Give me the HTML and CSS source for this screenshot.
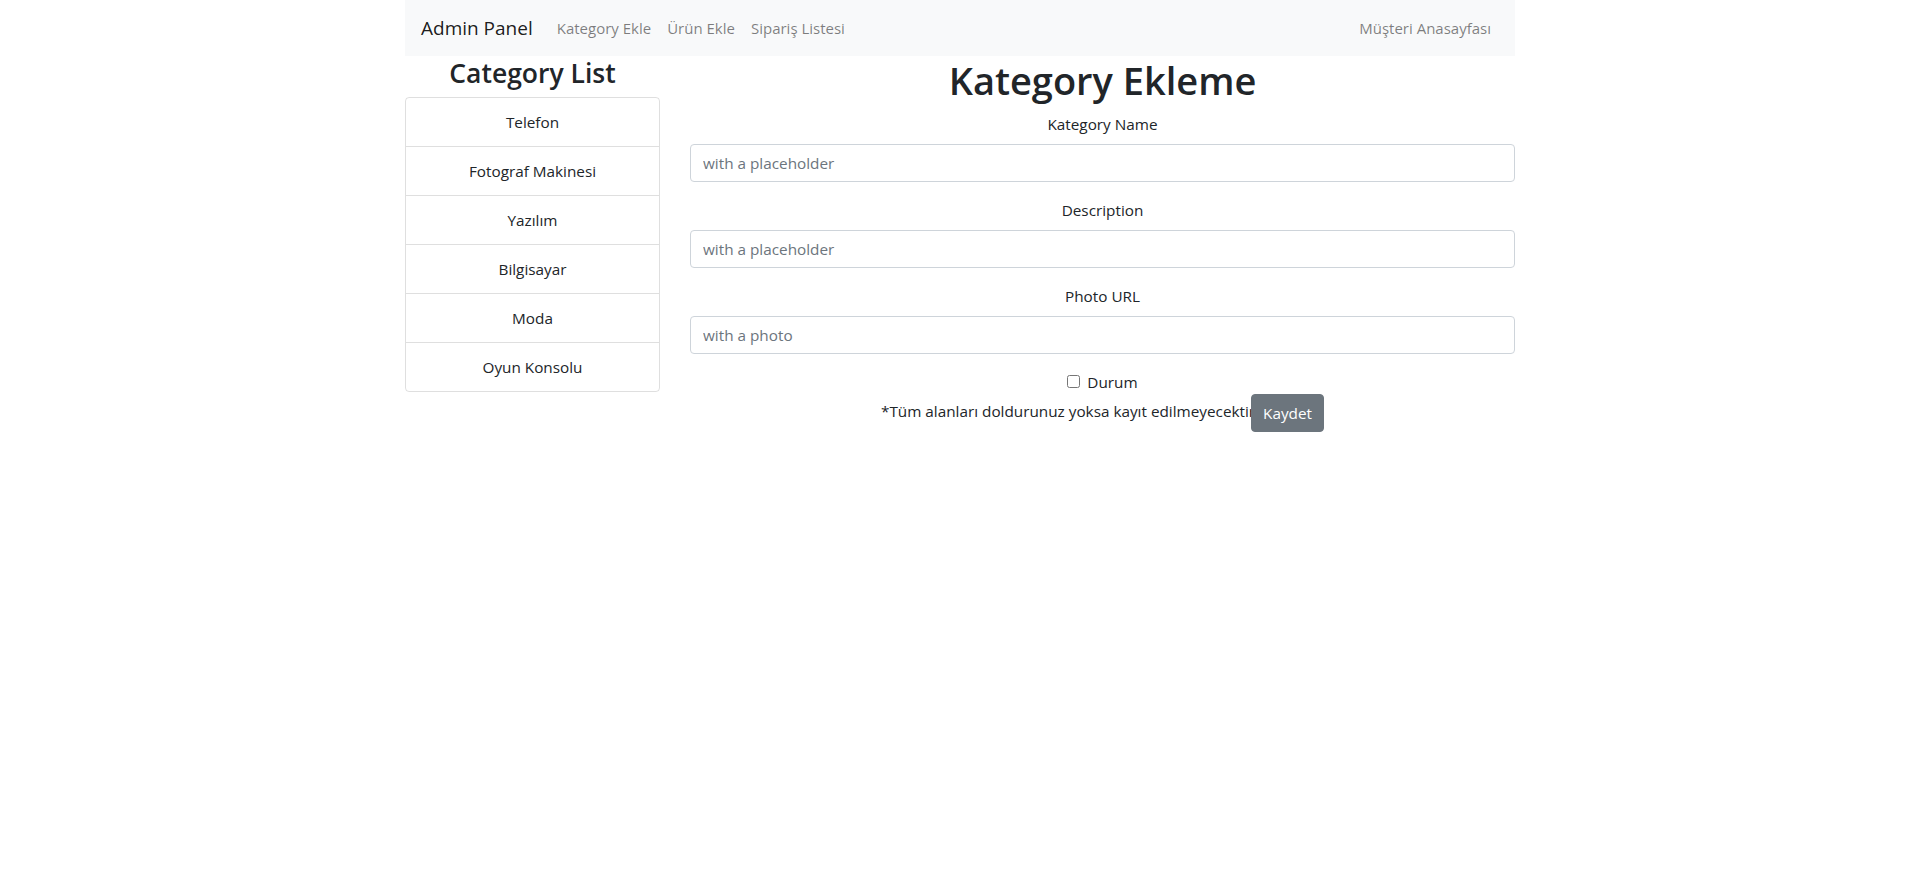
FILE: index.html
```html
<!DOCTYPE html>
<html lang="tr">
<head>
<meta charset="utf-8">
<title>Admin Panel</title>
<link rel="stylesheet" href="styles.css">
</head>
<body>
<div class="container">
  <nav class="navbar">
    <a class="brand" href="#">Admin Panel</a>
    <ul class="nav">
      <li><a class="nav-link" href="#">Kategory Ekle</a></li>
      <li><a class="nav-link" href="#">Ürün Ekle</a></li>
      <li><a class="nav-link" href="#">Sipariş Listesi</a></li>
    </ul>
    <ul class="nav nav-right">
      <li><a class="nav-link" href="#">Müşteri Anasayfası</a></li>
    </ul>
  </nav>
  <div class="row">
    <aside class="col-side">
      <h3 class="side-title">Category List</h3>
      <ul class="list-group">
        <li class="list-item">Telefon</li>
        <li class="list-item">Fotograf Makinesi</li>
        <li class="list-item">Yazılım</li>
        <li class="list-item">Bilgisayar</li>
        <li class="list-item">Moda</li>
        <li class="list-item">Oyun Konsolu</li>
      </ul>
    </aside>
    <main class="col-main">
      <h1 class="page-title">Kategory Ekleme</h1>
      <form class="form">
        <div class="form-group">
          <label class="form-label">Kategory Name</label>
          <input class="form-control" type="text" placeholder="with a placeholder">
        </div>
        <div class="form-group">
          <label class="form-label">Description</label>
          <input class="form-control" type="text" placeholder="with a placeholder">
        </div>
        <div class="form-group">
          <label class="form-label">Photo URL</label>
          <input class="form-control" type="text" placeholder="with a photo">
        </div>
        <div class="form-check">
          <input class="form-check-input" type="checkbox" id="durum">
          <label class="form-check-label" for="durum">Durum</label>
        </div>
        <div class="submit-line">*Tüm alanları doldurunuz yoksa kayıt edilmeyecektir<button class="btn" type="button">Kaydet</button></div>
      </form>
    </main>
  </div>
</div>
</body>
</html>
```

FILE: styles.css
```css
* { box-sizing: border-box; }

html, body {
  margin: 0;
  padding: 0;
  background: #fff;
}

body {
  font-family: "Open Sans", "Noto Sans", sans-serif;
  font-size: 15.3px;
  line-height: 24px;
  color: #212529;
}

.container {
  width: 1140px;
  margin: 0 auto;
  padding: 0 15px;
}

/* navbar */
.navbar {
  display: flex;
  align-items: center;
  height: 56px;
  padding: 8px 16px;
  background: #f8f9fa;
}

.brand {
  font-size: 19px;
  line-height: 30px;
  padding: 5px 0;
  margin-right: 16px;
  color: rgba(0, 0, 0, 0.9);
  text-decoration: none;
  white-space: nowrap;
}

.nav {
  display: flex;
  list-style: none;
  margin: 0;
  padding: 0;
}

.nav-right {
  margin-left: auto;
}

.nav-link {
  display: block;
  padding: 8px;
  font-size: 15px;
  line-height: 24px;
  color: rgba(0, 0, 0, 0.5);
  text-decoration: none;
  white-space: nowrap;
}

/* columns */
.row {
  display: flex;
  margin: 0 -15px;
}

.col-side {
  width: 285px;
  padding: 0 15px;
  flex: none;
}

.col-main {
  width: 855px;
  padding: 0 15px;
  flex: none;
  text-align: center;
}

.side-title {
  margin: 1px 0 7px;
  font-size: 26.5px;
  line-height: 33px;
  font-weight: 600;
  text-align: center;
}

.list-group {
  list-style: none;
  margin: 0;
  padding: 0;
  border: 1px solid rgba(0, 0, 0, 0.125);
  border-radius: 4px;
}

.list-item {
  padding: 12px 20px;
  line-height: 24px;
  text-align: center;
  border-top: 1px solid rgba(0, 0, 0, 0.125);
}

.list-item:first-child {
  border-top: none;
}

.page-title {
  margin: 0 0 8px;
  font-size: 38px;
  line-height: 48px;
  font-weight: 600;
}

.form {
  margin: 0;
}

.form-group {
  margin-bottom: 16px;
}

.form-label {
  display: block;
  margin-bottom: 8px;
  line-height: 24px;
}

.form-control {
  display: block;
  width: 100%;
  height: 38px;
  padding: 6px 12px;
  font-family: inherit;
  font-size: 15.3px;
  line-height: 24px;
  color: #495057;
  background: #fff;
  border: 1px solid #ced4da;
  border-radius: 4px;
}

.form-control::placeholder {
  color: #6c757d;
  opacity: 1;
}

.form-check {
  position: relative;
  display: block;
  padding-left: 20px;
  line-height: 24px;
}

.form-check-input {
  position: absolute;
  margin: 5px 0 0 -20px;
  width: 13px;
  height: 13px;
}

.form-check-label {
  display: inline-block;
}

.submit-line {
  line-height: 24px;
}

.btn {
  display: inline-block;
  vertical-align: middle;
  margin-left: -4px;
  padding: 6px 11px;
  font-family: inherit;
  font-size: 15.3px;
  line-height: 24px;
  color: #fff;
  background: #6c757d;
  border: 1px solid #6c757d;
  border-radius: 4px;
}
```
